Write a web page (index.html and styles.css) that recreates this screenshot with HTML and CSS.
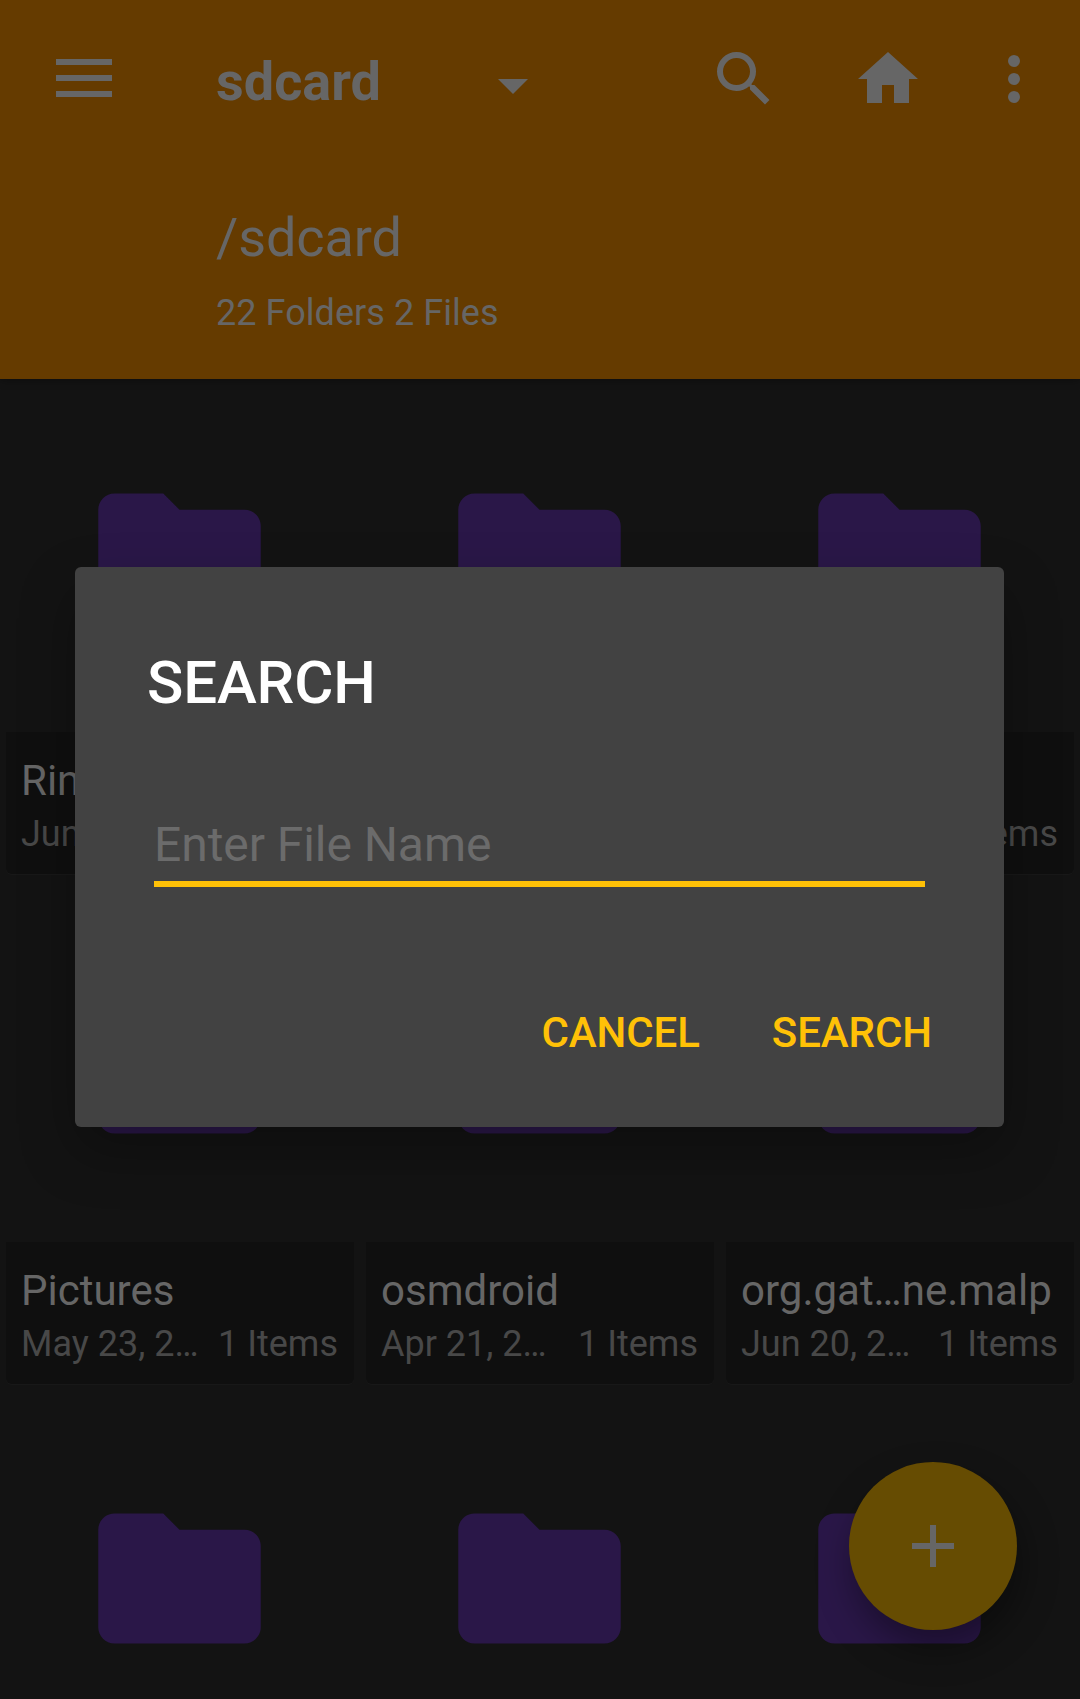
FILE: index.html
```html
<!DOCTYPE html>
<html lang="en">
<head>
<meta charset="utf-8">
<title>File manager</title>
<link rel="stylesheet" href="styles.css">
</head>
<body>
<svg class="defs" aria-hidden="true">
  <symbol id="folder" viewBox="0 0 24 24"><path d="M10 4H4C2.9 4 2 4.9 2 6V18C2 19.1 2.9 20 4 20H20C21.1 20 22 19.1 22 18V8C22 6.9 21.1 6 20 6H12Z"/></symbol>
</svg>
<div class="app">
  <header class="header">
    <div class="toolbar">
      <svg class="menu" viewBox="0 0 56 38"><path d="M0 0H56V6H0ZM0 16H56V22H0ZM0 32H56V38H0Z"/></svg>
      <h1 class="title">sdcard</h1>
      <svg class="caret" viewBox="0 0 30 15"><path d="M0 0H30L15 15Z"/></svg>
      <div class="actions">
        <svg class="icon" viewBox="0 0 24 24"><path d="M15.5 14h-.79l-.28-.27A6.471 6.471 0 0 0 16 9.5 6.5 6.5 0 1 0 9.5 16c1.61 0 3.09-.59 4.23-1.57l.27.28v.79l5 4.99L20.49 19l-4.99-5zm-6 0C7.01 14 5 11.99 5 9.5S7.01 5 9.5 5 14 7.01 14 9.5 11.99 14 9.5 14z"/></svg>
        <svg class="icon" viewBox="0 0 24 24"><path d="M10 20v-6h4v6h5v-8h3L12 3 2 12h3v8z"/></svg>
        <svg class="icon" viewBox="0 0 24 24"><circle cx="12" cy="6" r="2"/><circle cx="12" cy="12" r="2"/><circle cx="12" cy="18" r="2"/></svg>
      </div>
    </div>
    <div class="location">
      <div class="path">/sdcard</div>
      <div class="stats">22 Folders 2 Files</div>
    </div>
  </header>
  <main class="grid">
    <div class="card">
      <svg class="folder"><use href="#folder"/></svg>
      <div class="label"><div class="name">Ringtones</div><div class="meta"><span>Jun</span></div></div>
    </div>
    <div class="card">
      <svg class="folder"><use href="#folder"/></svg>
      <div class="label"></div>
    </div>
    <div class="card">
      <svg class="folder"><use href="#folder"/></svg>
      <div class="label"><div class="name"></div><div class="meta"><span></span><span>Items</span></div></div>
    </div>
    <div class="card">
      <svg class="folder"><use href="#folder"/></svg>
      <div class="label"><div class="name">Pictures</div><div class="meta"><span>May 23, 2…</span><span>1 Items</span></div></div>
    </div>
    <div class="card">
      <svg class="folder"><use href="#folder"/></svg>
      <div class="label"><div class="name">osmdroid</div><div class="meta"><span>Apr 21, 2…</span><span>1 Items</span></div></div>
    </div>
    <div class="card">
      <svg class="folder"><use href="#folder"/></svg>
      <div class="label"><div class="name">org.gat…ne.malp</div><div class="meta"><span>Jun 20, 2…</span><span>1 Items</span></div></div>
    </div>
    <div class="card"><svg class="folder"><use href="#folder"/></svg></div>
    <div class="card"><svg class="folder"><use href="#folder"/></svg></div>
    <div class="card"><svg class="folder"><use href="#folder"/></svg></div>
  </main>
  <div class="fab"><svg viewBox="0 0 42 42"><path d="M18 0H24V18H42V24H24V42H18V24H0V18H18Z"/></svg></div>
  <section class="dialog">
    <h2 class="dialog-title">SEARCH</h2>
    <div class="field">Enter File Name</div>
    <div class="buttons"><span>CANCEL</span><span>SEARCH</span></div>
  </section>
</div>
</body>
</html>
```
FILE: styles.css
```css
* { box-sizing: border-box; }
body {
  margin: 0;
  background: #131313;
  font-family: Roboto, sans-serif;
  color: #666;
}
svg { display: block; fill: #666; flex: none; }
.defs { position: absolute; width: 0; height: 0; }
.app { position: relative; height: 1699px; overflow: hidden; }

.header {
  position: relative;
  height: 379px;
  background: #653b00;
  box-shadow: 0 2px 8px rgba(0, 0, 0, .3);
}
.toolbar { display: flex; align-items: center; height: 158px; padding: 0 30px 0 56px; }
.menu { width: 56px; height: 38px; margin-top: -2px; }
.title { margin: 5px 0 0 104px; width: 282px; font-size: 54px; line-height: 64px; font-weight: 700; }
.caret { width: 30px; height: 15px; margin-top: 15px; }
.actions { display: flex; margin-left: auto; }
.icon { width: 72px; height: 72px; }
.icon:nth-child(2) { margin: 0 54px 0 72px; }
.location { padding: 48px 0 0 216px; }
.path { font-size: 54px; line-height: 64px; letter-spacing: -.1px; }
.stats { margin-top: 21px; font-size: 36px; line-height: 44px; letter-spacing: .06px; }

.grid {
  display: grid;
  grid-template-columns: repeat(3, 348px);
  grid-auto-rows: 510px;
  column-gap: 12px;
  padding: 0 6px;
}
.card { display: flex; flex-direction: column; align-items: center; padding-top: 82px; }
.folder { width: 195px; height: 195px; margin-right: 1px; fill: #2a1748; }
.label {
  width: 100%;
  height: 142px;
  margin-top: 76px;
  padding: 24px 15px 0;
  background: #0f0f0f;
  border-radius: 0 0 6px 6px;
  box-shadow: 0 1px 0 #181818;
}
.name { height: 50px; font-size: 42px; line-height: 50px; }
.meta {
  display: flex;
  justify-content: space-between;
  margin: 6px 1px 0 0;
  font-size: 36px;
  line-height: 44px;
  color: #484848;
}

.fab {
  position: absolute;
  left: 849px;
  top: 1462px;
  display: flex;
  align-items: center;
  justify-content: center;
  width: 168px;
  height: 168px;
  border-radius: 50%;
  background: #664c02;
  box-shadow: 4px 18px 36px rgba(0, 0, 0, .38);
}
.fab svg { width: 42px; height: 42px; }

.dialog {
  position: absolute;
  left: 75px;
  top: 567px;
  width: 929px;
  height: 560px;
  padding: 81px 72px 0;
  border-radius: 6px;
  background: #424242;
  box-shadow: 0 24px 56px rgba(0, 0, 0, .28);
}
.dialog-title { margin: 0; font-size: 60px; line-height: 70px; font-weight: 500; letter-spacing: -.15px; color: #fff; }
.field {
  height: 70px;
  margin: 99px 7px 0;
  font-size: 48px;
  line-height: 56px;
  letter-spacing: -.06px;
  color: #6b6b6b;
  border-bottom: 6px solid #ffc107;
}
.buttons {
  display: flex;
  justify-content: flex-end;
  gap: 72px;
  margin-top: 121px;
  font-size: 42px;
  line-height: 50px;
  font-weight: 500;
  letter-spacing: -.08px;
  color: #ffc107;
}
```
